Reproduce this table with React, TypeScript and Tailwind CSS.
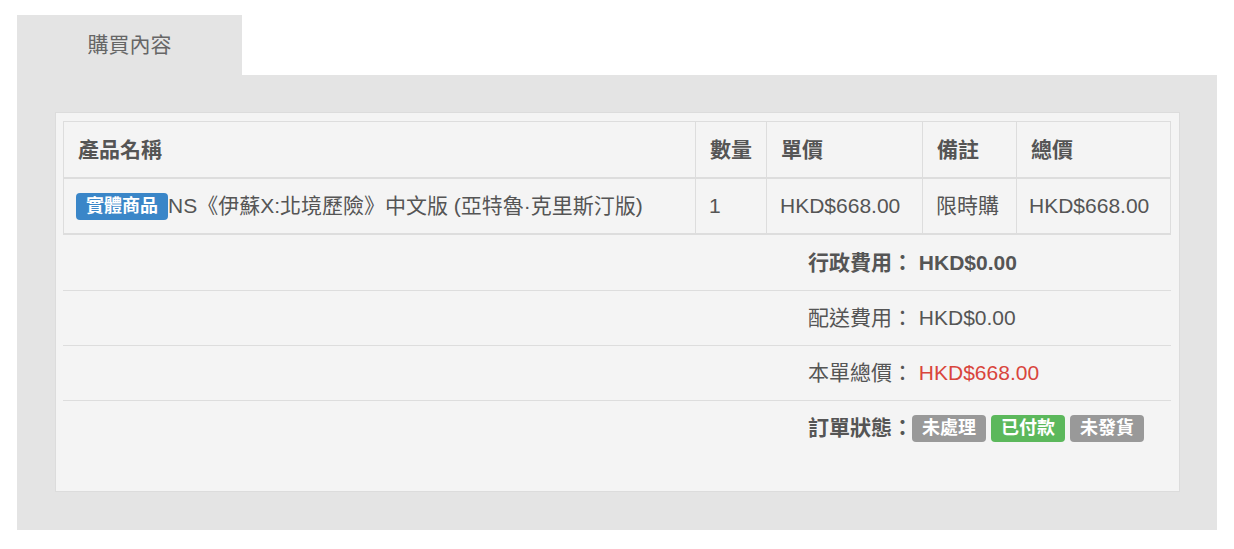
const font = { fontFamily: '"Liberation Sans", "Noto Sans CJK TC", sans-serif' };

const columns = [
  { title: "產品名稱" },
  { title: "數量" },
  { title: "單價" },
  { title: "備註" },
  { title: "總價" },
];

const grid = "grid grid-cols-[631px_71px_156px_94px_156px]";

const Label = ({ color, children }: { color: string; children: React.ReactNode }) => (
  <span
    className={`inline-flex h-[27px] items-center rounded-[4px] px-[10px] text-[18px] font-bold leading-none text-white ${color}`}
  >
    {children}
  </span>
);

const App = () => {
  return (
    <div className="min-h-[549px] bg-white px-[17px] pt-[15px] text-[#555]" style={font}>
      <div className="flex h-[60px] w-[225px] items-center justify-center bg-[#e4e4e4] text-[21px] text-[#666]">
        購買內容
      </div>
      <div className="h-[455px] w-[1200px] bg-[#e4e4e4] px-[38px] pt-[37px]">
        <div className="h-[380px] w-[1125px] border border-[#dcdcdc] bg-[#f4f4f4] px-[7px] pt-[8px]">
          <div className="w-[1108px] text-[21px]">
            {/* header */}
            <div className={`${grid} h-[58px] border border-b-2 border-[#ddd] font-bold`}>
              {columns.map((c, i) => (
                <div
                  key={c.title}
                  className={`flex items-center px-[14px] ${i > 0 ? "border-l border-[#ddd]" : ""}`}
                >
                  {c.title}
                </div>
              ))}
            </div>
            {/* body */}
            <div className={`${grid} h-[56px] border border-t-0 border-b-2 border-[#ddd]`}>
              <div className="flex items-center whitespace-nowrap pl-[12px]">
                <Label color="bg-[#3a86c8]">實體商品</Label>
                NS《伊蘇X:北境歷險》中文版 (亞特魯·克里斯汀版)
              </div>
              <div className="flex items-center border-l border-[#ddd] px-[13px]">1</div>
              <div className="flex items-center border-l border-[#ddd] px-[13px]">HKD$668.00</div>
              <div className="flex items-center border-l border-[#ddd] px-[13px]">限時購</div>
              <div className="flex items-center border-l border-[#ddd] px-[12px]">HKD$668.00</div>
            </div>
            {/* summary */}
            <div className="flex h-[55px] items-center pl-[745px] font-bold">
              行政費用：&nbsp;HKD$0.00
            </div>
            <div className="flex h-[55px] items-center border-t border-[#ddd] pl-[745px]">
              配送費用：&nbsp;HKD$0.00
            </div>
            <div className="flex h-[55px] items-center border-t border-[#ddd] pl-[745px]">
              本單總價：&nbsp;<span className="text-[#d9453c]">HKD$668.00</span>
            </div>
            <div className="flex h-[55px] items-center gap-[5px] border-t border-[#ddd] pl-[745px]">
              <span className="mr-[-6px] font-bold">訂單狀態：</span>
              <Label color="bg-[#999]">未處理</Label>
              <Label color="bg-[#5cb85c]">已付款</Label>
              <Label color="bg-[#999]">未發貨</Label>
            </div>
          </div>
        </div>
      </div>
    </div>
  );
};

export default App;
